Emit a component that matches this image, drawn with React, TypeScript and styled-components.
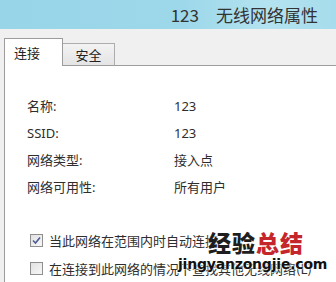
import React from "react";
import styled, { createGlobalStyle } from "styled-components";

const Global = createGlobalStyle`
  html, body { margin: 0; padding: 0; }
  body {
    width: 336px;
    height: 282px;
    overflow: hidden;
    background: #f0f0f0;
    font-family: "Segoe UI", "Noto Sans", "Noto Sans CJK SC", sans-serif;
    color: #2b2b2b;
  }
`;

const Window = styled.div`
  position: relative;
  width: 336px;
  height: 282px;
  display: flex;
  flex-direction: column;
  overflow: hidden;
  background: #f0f0f0;
`;

const TitleBar = styled.div`
  height: 29px;
  flex: none;
  display: flex;
  align-items: center;
  justify-content: flex-end;
  padding-right: 18px;
  background: linear-gradient(90deg, #98d5e8 0%, #9dd8ea 55%, #b4e3f0 80%, #a6dcec 100%);
  font-family: "Noto Sans CJK SC", sans-serif;
  font-size: 17px;
  color: #333;
`;

const TitleNum = styled.span`
  margin-right: 17px;
`;

const Body = styled.div`
  flex: 1;
  display: flex;
  flex-direction: column;
  padding-top: 9px;
  padding-left: 4px;
`;

const Tabs = styled.div`
  display: flex;
  align-items: flex-end;
  height: 28px;
  position: relative;
  z-index: 1;
  margin-bottom: -1px;
`;

const Tab = styled.div<{ $active?: boolean }>`
  box-sizing: border-box;
  display: flex;
  align-items: center;
  justify-content: ${(p) => (p.$active ? "flex-start" : "center")};
  padding-left: ${(p) => (p.$active ? "9px" : "0")};
  width: ${(p) => (p.$active ? "59px" : "52px")};
  height: ${(p) => (p.$active ? "28px" : "23px")};
  border: 1px solid ${(p) => (p.$active ? "#9c9c9c" : "#adadad")};
  border-bottom: ${(p) => (p.$active ? "none" : "1px solid #9c9c9c")};
  border-left: ${(p) => (p.$active ? "1px solid #9c9c9c" : "none")};
  background: ${(p) => (p.$active ? "#ffffff" : "linear-gradient(180deg, #f3f3f3 0%, #e4e4e4 100%)")};
  font-family: "Noto Sans CJK SC", sans-serif;
  font-size: 13px;
  color: #222;
`;

const Panel = styled.div`
  flex: 1;
  background: #ffffff;
  border-top: 1px solid #9c9c9c;
  border-left: 1px solid #9c9c9c;
  padding-top: 26px;
  padding-left: 22px;
  display: flex;
  flex-direction: column;
`;

const InfoGrid = styled.div`
  display: grid;
  grid-template-columns: 147px 1fr;
  grid-auto-rows: 27px;
  align-items: center;
  font-size: 13px;
  font-family: "Segoe UI", "Noto Sans", "Noto Sans CJK SC", sans-serif;
  color: #2e2e2e;
`;

const Cell = styled.div``;

const Checks = styled.div`
  margin-top: 26px;
  display: flex;
  flex-direction: column;
`;

const CheckRow = styled.div`
  height: 28px;
  display: flex;
  align-items: center;
  gap: 6px;
  padding-left: 3px;
  font-family: "Noto Sans CJK SC", sans-serif;
  font-size: 13px;
  color: #2e2e2e;
  white-space: nowrap;
`;

const Box = styled.div`
  box-sizing: border-box;
  width: 13px;
  height: 13px;
  flex: none;
  border: 1px solid #8f8f8f;
  background: linear-gradient(135deg, #e2e2e2 0%, #f7f7f7 100%);
  display: flex;
  align-items: center;
  justify-content: center;
`;

const Watermark = styled.div`
  position: absolute;
  left: 178px;
  top: 229px;
  display: flex;
  flex-direction: column;
  align-items: flex-start;
  pointer-events: none;
`;

const WmTitle = styled.div`
  margin-left: 30px;
  font-family: "Noto Sans CJK SC", sans-serif;
  font-weight: 900;
  font-size: 23px;
  line-height: 27px;
  letter-spacing: 1px;
  color: #1e1e1e;
  text-shadow: 0 0 2px #fff, 0 0 2px #fff;
`;

const WmRed = styled.span`
  color: #c4262c;
`;

const WmUrl = styled.div`
  font-family: "DejaVu Sans", sans-serif;
  font-weight: bold;
  font-size: 14px;
  line-height: 16px;
  color: #111;
  letter-spacing: -0.2px;
  text-shadow: 0 0 2px #fff, 0 0 2px #fff, 0 0 1px #fff;
`;

const rows: [string, string][] = [
  ["名称:", "123"],
  ["SSID:", "123"],
  ["网络类型:", "接入点"],
  ["网络可用性:", "所有用户"],
];

export default function App() {
  return (
    <>
      <Global />
      <Window>
        <TitleBar>
          <TitleNum>123</TitleNum>
          <span>无线网络属性</span>
        </TitleBar>
        <Body>
          <Tabs>
            <Tab $active>连接</Tab>
            <Tab>安全</Tab>
          </Tabs>
          <Panel>
            <InfoGrid>
              {rows.map(([k, v]) => (
                <React.Fragment key={k}>
                  <Cell>{k}</Cell>
                  <Cell>{v}</Cell>
                </React.Fragment>
              ))}
            </InfoGrid>
            <Checks>
              <CheckRow>
                <Box>
                  <svg width="9" height="9" viewBox="0 0 9 9">
                    <path d="M1 4.5 L3.5 7 L8 1.5" fill="none" stroke="#4b5e94" strokeWidth="1.6" />
                  </svg>
                </Box>
                <span>当此网络在范围内时自动连接</span>
              </CheckRow>
              <CheckRow>
                <Box />
                <span>在连接到此网络的情况下查找其他无线网络(L)</span>
              </CheckRow>
            </Checks>
          </Panel>
        </Body>
        <Watermark>
          <WmTitle>
            经验<WmRed>总结</WmRed>
          </WmTitle>
          <WmUrl>jingyanzongjie.com</WmUrl>
        </Watermark>
      </Window>
    </>
  );
}
